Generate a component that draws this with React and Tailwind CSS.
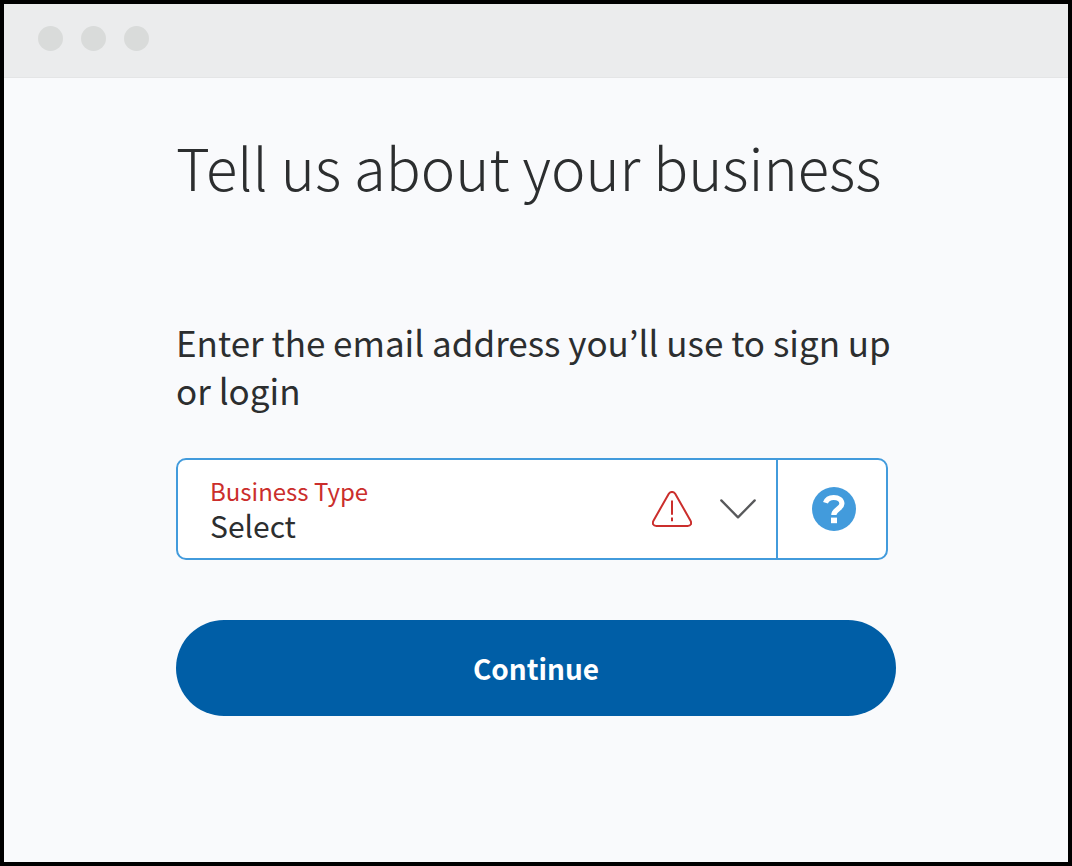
import React, { useState } from "react";

const WarningIcon = () => (
  <svg className="h-9 w-10 shrink-0" viewBox="0 0 40 36" fill="none" stroke="#cb2e2c" strokeWidth="2" aria-hidden="true">
    <path d="M16.8 2.8 1.6 29.4C-.1 32.6 1.2 35 4.4 35h31.2c3.2 0 4.5-2.4 2.8-5.6L23.2 2.8c-1.6-2.5-4.8-2.5-6.4 0z" strokeLinejoin="round" />
    <path d="M20 9.5v14.3M20 26.5v3.8" />
  </svg>
);

const ChevronIcon = () => (
  <svg className="h-5 w-9 shrink-0" viewBox="0 0 36 20" fill="none" stroke="#58595b" strokeWidth="2.3" aria-hidden="true">
    <path d="M1.3 1.4 18 18.4 34.7 1.4" strokeLinecap="round" strokeLinejoin="round" />
  </svg>
);

const HelpIcon = () => (
  <svg className="h-11 w-11" viewBox="0 0 44 44" aria-hidden="true">
    <circle cx="22" cy="22" r="22" fill="#429bdc" />
    <path d="M13.5 15.8c1.2-3.6 4.2-5.3 8.2-5.3 4.9 0 8.2 2.5 8.2 6.3 0 4.8-7.9 5.3-8.1 11.2" fill="none" stroke="#fff" strokeWidth="5.2" />
    <path d="M19 30.6h6v5.6h-6z" fill="#fff" />
  </svg>
);

const App = () => {
  const [businessType, setBusinessType] = useState("");

  return (
    <div className="flex min-h-screen flex-col border-4 border-black bg-[#f9fafc] font-['Noto_Sans_CJK_KR','Noto_Sans',sans-serif] text-[#2c2e2f]">
      {/* Window bar */}
      <div className="flex items-start gap-[18px] border-b border-[#e4e5e6] bg-[#ebeced] px-[34px] pt-[22px] pb-[26px]">
        <span className="size-[25px] rounded-full bg-[#d9dbda]" />
        <span className="size-[25px] rounded-full bg-[#d9dbda]" />
        <span className="size-[25px] rounded-full bg-[#d9dbda]" />
      </div>

      {/* Form */}
      <main className="mx-auto w-full max-w-[720px] pt-12">
        <h1 className="text-[58px] leading-[80px] font-light">Tell us about your business</h1>

        <form className="mt-28" onSubmit={(e) => e.preventDefault()}>
          <p className="text-[35px] leading-12">Enter the email address you’ll use to sign up or login</p>

          <div className="mt-11 mr-2 flex rounded-[10px] border-2 border-[#429bdc] bg-white">
            <div className="flex flex-1 items-center py-[15px] pr-5 pl-8">
              <div className="flex flex-1 flex-col">
                <label htmlFor="business-type" className="text-2xl leading-8 text-[#cb2e2c]">
                  Business Type
                </label>
                <select
                  id="business-type"
                  className="h-9 appearance-none bg-transparent text-[30px] leading-9 outline-none"
                  value={businessType}
                  onChange={(e) => setBusinessType(e.target.value)}
                >
                  <option value="">Select</option>
                  <option value="individual">Individual</option>
                  <option value="partnership">Partnership</option>
                  <option value="corporation">Corporation</option>
                </select>
              </div>
              <div className="flex items-center gap-7">
                <WarningIcon />
                <ChevronIcon />
              </div>
            </div>
            <button type="button" aria-label="Help" className="flex w-[110px] items-center justify-center border-l-2 border-[#429bdc] pl-1">
              <HelpIcon />
            </button>
          </div>

          <button type="submit" className="mt-[60px] h-24 w-full rounded-full bg-[#005ea6] text-[28px] font-bold text-white">
            Continue
          </button>
        </form>
      </main>
    </div>
  );
};

export default App;
